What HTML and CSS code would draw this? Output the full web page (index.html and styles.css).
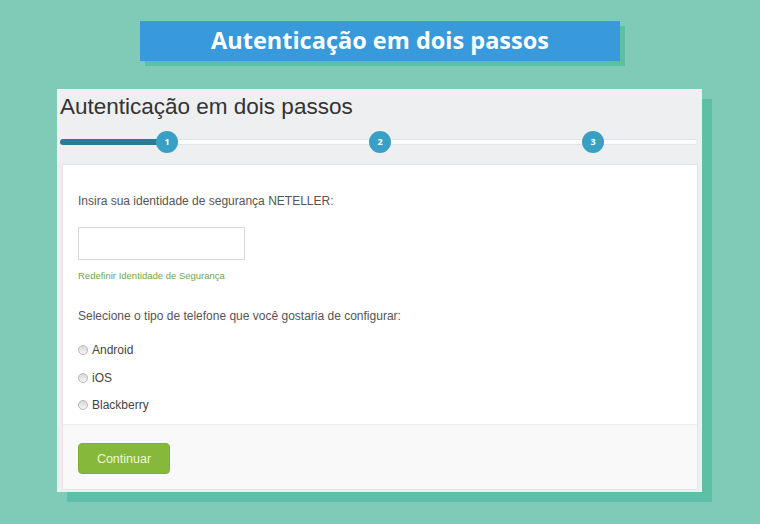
FILE: index.html
```html
<!DOCTYPE html>
<html lang="pt">
<head>
<meta charset="utf-8">
<link rel="stylesheet" href="styles.css">
</head>
<body>
<div class="banner">Autenticação em dois passos</div>
<div class="panel">
  <h1 class="title">Autenticação em dois passos</h1>
  <div class="stepper">
    <div class="track"><div class="fill"></div></div>
    <span class="step s1">1</span>
    <span class="step s2">2</span>
    <span class="step s3">3</span>
  </div>
  <div class="card">
    <div class="card-body">
      <p class="label">Insira sua identidade de segurança NETELLER:</p>
      <input class="field" type="text">
      <a class="link" href="#">Redefinir Identidade de Segurança</a>
      <p class="label second">Selecione o tipo de telefone que você gostaria de configurar:</p>
      <label class="radio"><input type="radio" name="tel"><span>Android</span></label>
      <label class="radio"><input type="radio" name="tel"><span>iOS</span></label>
      <label class="radio"><input type="radio" name="tel"><span>Blackberry</span></label>
    </div>
    <div class="card-footer">
      <button class="btn">Continuar</button>
    </div>
  </div>
</div>
</body>
</html>
```
FILE: styles.css
```css
* { box-sizing: border-box; }
html, body { margin: 0; padding: 0; }
body {
  background: #80cbb7;
  width: 760px;
  height: 524px;
  overflow: hidden;
  font-family: "Liberation Sans", Arial, sans-serif;
  padding-top: 21px;
}
.banner {
  margin-left: 140px;
  width: 480px;
  height: 40px;
  background: #3899db;
  box-shadow: 5px 5px 0 #5dbfa5;
  color: #fff;
  font-family: "Open Sans", "Noto Sans", sans-serif;
  font-weight: 700;
  font-size: 23.5px;
  line-height: 39px;
  text-align: center;
}
.panel {
  margin-left: 57px;
  margin-top: 28px;
  width: 645px;
  height: 403px;
  background: #eeeff0;
  box-shadow: 10px 10px 0 #5dbfa5;
  display: flex;
  flex-direction: column;
  padding: 0 4px 2px 5px;
}
.title {
  margin: 4px 0 0 -2px;
  font-weight: 400;
  font-size: 22.5px;
  line-height: 28px;
  color: #333;
}
.stepper {
  position: relative;
  height: 24px;
  margin: 9px 0 10px -2px;
  width: 638px;
}
.track {
  position: absolute;
  left: 0; right: 0;
  top: 9px;
  height: 6px;
  background: #fdfdfd;
  border: 1px solid #e2e3e4;
  border-radius: 3px;
}
.fill {
  position: absolute;
  left: -1px; top: -1px;
  width: 108px;
  height: 6px;
  background: #2a7b94;
  border-radius: 3px;
}
.step {
  position: absolute;
  top: 1px;
  width: 22px;
  height: 22px;
  border-radius: 50%;
  background: #3a9fc5;
  color: #fff;
  font-size: 9px;
  font-weight: 700;
  line-height: 22px;
  text-align: center;
  font-family: "Open Sans", sans-serif;
}
.s1 { left: 96px; }
.s2 { left: 309px; }
.s3 { left: 522px; }
.card {
  flex: 1;
  background: #fff;
  border: 1px solid #e4e4e4;
  display: flex;
  flex-direction: column;
}
.card-body {
  flex: 1;
  padding: 28px 15px 0;
  display: flex;
  flex-direction: column;
  align-items: flex-start;
}
.label {
  margin: 0;
  font-size: 12px;
  line-height: 16px;
  color: #555;
}
.field {
  margin-top: 18px;
  width: 167px;
  height: 33px;
  border: 1px solid #d9d9d9;
  background: #fff;
}
.link {
  margin-top: 10px;
  font-size: 9.5px;
  line-height: 12px;
  color: #6fa84a;
  text-decoration: none;
}
.second { margin-top: 26px; }
.radio {
  display: flex;
  align-items: center;
  margin-top: 11px;
  height: 17px;
  font-size: 12px;
  color: #444;
}
.radio:first-of-type { margin-top: 17px; }
.radio:last-of-type { margin-top: 10px; }
.radio input {
  appearance: none;
  -webkit-appearance: none;
  margin: 0 4px 0 0;
  width: 10px;
  height: 10px;
  border-radius: 50%;
  border: 1px solid #b9b9b9;
  background: linear-gradient(#d8d8d8, #f6f6f6);
}
.card-footer {
  height: 65px;
  background: #f9f9f9;
  border-top: 1px solid #ececec;
  padding: 18px 15px 0;
}
.btn {
  width: 92px;
  height: 31px;
  background: #86b93b;
  border: 1px solid #7daf35;
  border-radius: 4px;
  color: #eef6d8;
  font-family: "Liberation Sans", Arial, sans-serif;
  font-size: 12.5px;
  padding: 0;
}
```
